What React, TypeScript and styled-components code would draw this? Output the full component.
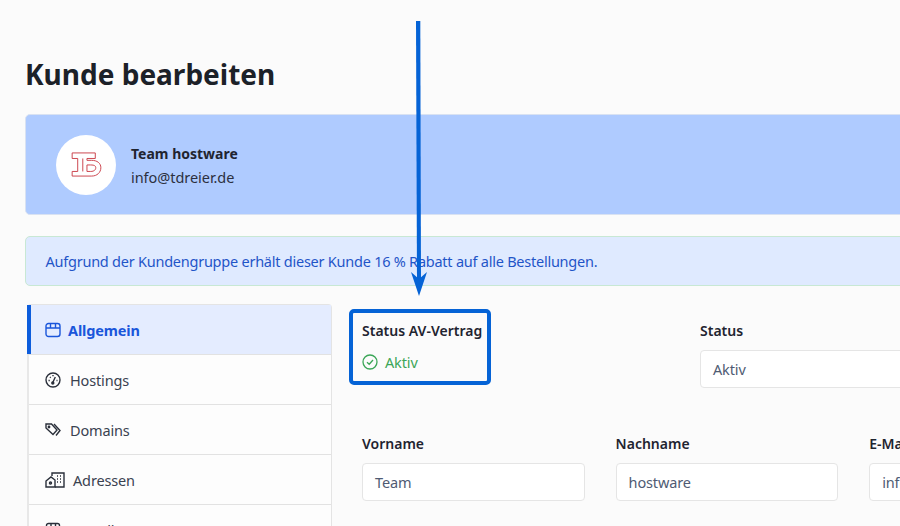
import React from "react";
import styled, { createGlobalStyle } from "styled-components";

const GlobalStyle = createGlobalStyle`
  html, body {
    margin: 0;
    padding: 0;
    width: 900px;
    height: 526px;
    overflow: hidden;
    background: #fbfbfb;
    font-family: "Noto Sans", "Open Sans", sans-serif;
    color: #1f2430;
  }
`;

const Root = styled.div`
  position: relative;
`;

const Page = styled.div`
  width: 1240px;
  padding: 54px 0 0 25px;
  box-sizing: border-box;
`;

const Title = styled.h1`
  margin: 0 0 20px;
  font-size: 28px;
  line-height: 40px;
  font-weight: 700;
  color: #1c2128;
`;

const ProfileCard = styled.div`
  display: flex;
  align-items: center;
  gap: 15px;
  height: 101px;
  box-sizing: border-box;
  padding: 0 30px;
  background: #afcbff;
  border: 1px solid #d9e2f2;
  border-radius: 5px;
`;

const Avatar = styled.div`
  width: 60px;
  height: 60px;
  border-radius: 50%;
  background: #fff;
  display: flex;
  align-items: center;
  justify-content: center;
`;

const ProfileText = styled.div`
  padding-top: 2px;
`;

const ProfileName = styled.div`
  font-size: 14px;
  line-height: 20px;
  font-weight: 700;
  margin-bottom: 3px;
`;

const ProfileMail = styled.div`
  font-size: 14.5px;
  line-height: 20px;
  letter-spacing: -0.05px;
  color: #2c3040;
`;

const Notice = styled.div`
  margin-top: 21px;
  height: 50px;
  box-sizing: border-box;
  padding: 0 19.5px;
  display: flex;
  align-items: center;
  background: #dfeaff;
  border: 1px solid #c8e8d4;
  border-radius: 5px;
  color: #1f55c8;
  font-size: 14.5px;
  letter-spacing: -0.24px;
`;

const Content = styled.div`
  display: flex;
  margin-top: 18px;
`;

const Sidebar = styled.div`
  width: 302px;
  margin-left: 2px;
  flex: none;
  background: #fdfdfd;
  border: 1px solid #e4e4e4;
  border-left: 2px solid #e8e8e8;
  border-radius: 4px 4px 0 0;
`;

const NavItem = styled.div<{ $active?: boolean; $gap?: number }>`
  height: 50px;
  display: flex;
  align-items: center;
  gap: ${(p) => p.$gap ?? 9}px;
  font-size: 14.5px;
  letter-spacing: -0.15px;
  box-sizing: border-box;
  border-bottom: 1px solid #e2e2e2;
  color: ${(p) => (p.$active ? "#1a56db" : "#3a4250")};
  font-weight: ${(p) => (p.$active ? 700 : 400)};
  background: ${(p) => (p.$active ? "#e4ecff" : "transparent")};
  box-shadow: ${(p) => (p.$active ? "inset 4px 0 0 #0d5ddc" : "none")};
  margin-left: ${(p) => (p.$active ? "-2px" : "0")};
  padding-left: ${(p) => (p.$active ? "18px" : "16px")};
`;

const NavIcon = styled.svg<{ $wide?: boolean; $active?: boolean }>`
  width: ${(p) => (p.$wide ? 20 : 16)}px;
  height: 16px;
  fill: none;
  stroke: ${(p) => (p.$active ? "#1a56db" : "#2a2f3a")};
  stroke-width: 1.4;
  flex: none;
`;

const Main = styled.div`
  flex: 1;
  padding: 17px 0 0 30px;
`;

const TopRow = styled.div`
  display: flex;
`;

const AvStatus = styled.div`
  position: relative;
  width: 253px;
  margin-right: 85px;
  height: 70px;
`;

const Highlight = styled.div`
  position: absolute;
  left: -13px;
  top: -12px;
  width: 142px;
  height: 76px;
  box-sizing: border-box;
  border: 4px solid #0563d6;
  border-radius: 5px;
`;

const FieldLabel = styled.div`
  font-size: 14px;
  line-height: 20px;
  font-weight: 600;
  color: #1f2430;
  margin-bottom: 9px;
`;

const ActiveState = styled.div`
  display: flex;
  align-items: center;
  gap: 7px;
  font-size: 14.5px;
  letter-spacing: -0.15px;
  line-height: 20px;
  color: #3ba657;
  margin-top: 11px;
`;

const Field = styled.div<{ $width: number }>`
  width: ${(p) => p.$width}px;
  flex: none;
`;

const Input = styled.div`
  height: 38px;
  box-sizing: border-box;
  padding: 0 12px;
  display: flex;
  align-items: center;
  background: #fff;
  border: 1px solid #e5e5e5;
  border-radius: 4px;
  font-size: 14.5px;
  letter-spacing: -0.15px;
  color: #4f5b73;
`;

const NameRow = styled.div`
  display: flex;
  gap: 31px;
  margin-top: 43px;
`;

const Arrow = styled.svg`
  position: absolute;
  left: 405px;
  top: 20px;
  width: 30px;
  height: 280px;
`;

const TdLogo = () => (
  <svg width="31" height="25" viewBox="0 0 33 27" fill="none" stroke="#c93a44" strokeWidth="1">
    <path d="M1 1H26V7H17V9H22C28 9 32 12 32 17S28 26 22 26H1V21H7V7H1Z" />
    <path d="M12.500 7V21M17 14H21C25 14 26.500 15 26.500 17S25 21 21 21H17Z" />
  </svg>
);

const App: React.FC = () => (
  <Root>
    <GlobalStyle />
    <Page>
      <Title>Kunde bearbeiten</Title>
      <ProfileCard>
        <Avatar>
          <TdLogo />
        </Avatar>
        <ProfileText>
          <ProfileName>Team hostware</ProfileName>
          <ProfileMail>info@tdreier.de</ProfileMail>
        </ProfileText>
      </ProfileCard>
      <Notice>Aufgrund der Kundengruppe erhält dieser Kunde 16 % Rabatt auf alle Bestellungen.</Notice>
      <Content>
        <Sidebar>
          <NavItem $active $gap={7}>
            <NavIcon $active viewBox="0 0 16 16">
              <rect x="1" y="1.500" width="14" height="13" rx="2.500" />
              <path d="M1 6H15M5.500 1.500V6M10.500 1.500V6" />
            </NavIcon>
            Allgemein
          </NavItem>
          <NavItem>
            <NavIcon viewBox="0 0 16 16">
              <circle cx="8" cy="8" r="7" />
              <path d="M7.800 10.500L10.300 5M3.500 8.500H4.800M5 5L5.700 5.700M8 3V4.200M11.500 8.500H12.500" />
              <circle cx="7.800" cy="11" r="1" fill="#2a2f3a" />
            </NavIcon>
            Hostings
          </NavItem>
          <NavItem>
            <NavIcon viewBox="0 0 16 16">
              <path d="M1 2H6.500L12 8L8 12.500L1 6Z" />
              <path d="M9 2L15 8.500L11 13.500" />
              <circle cx="4" cy="5" r="0.700" />
            </NavIcon>
            Domains
          </NavItem>
          <NavItem $gap={8}>
            <NavIcon $wide viewBox="0 0 20 16">
              <path d="M1 9L6 5L10 8V15H1Z" />
              <path d="M7 4V1H19V15H10" />
              <path d="M12 4H13M15 4H16M12 7H13M15 7H16M12 10H13M15 10H16" />
              <circle cx="5.500" cy="11" r="1" />
            </NavIcon>
            Adressen
          </NavItem>
          <NavItem>
            <NavIcon viewBox="0 0 16 16">
              <rect x="1.500" y="1.500" width="13" height="13" rx="2" />
              <path d="M1.500 6H14.500M6 1.500V6M10.500 1.500V6" />
            </NavIcon>
            Bestellungen
          </NavItem>
        </Sidebar>
        <Main>
          <TopRow>
            <AvStatus>
              <Highlight />
              <FieldLabel>Status AV-Vertrag</FieldLabel>
              <ActiveState>
                <svg width="16" height="16" viewBox="0 0 16 16" fill="none" stroke="#3ba657" strokeWidth="1.300">
                  <circle cx="8" cy="8" r="7" />
                  <path d="M5 8.200L7.200 10.300L11 6" />
                </svg>
                Aktiv
              </ActiveState>
            </AvStatus>
            <Field $width={400}>
              <FieldLabel>Status</FieldLabel>
              <Input>Aktiv</Input>
            </Field>
          </TopRow>
          <NameRow>
            <Field $width={222.6}>
              <FieldLabel>Vorname</FieldLabel>
              <Input>Team</Input>
            </Field>
            <Field $width={222.6}>
              <FieldLabel>Nachname</FieldLabel>
              <Input>hostware</Input>
            </Field>
            <Field $width={222.6}>
              <FieldLabel>E-Mail</FieldLabel>
              <Input>info@tdreier.de</Input>
            </Field>
          </NameRow>
        </Main>
      </Content>
    </Page>
    <Arrow viewBox="0 0 30 280">
      <path d="M11 1H15.300L16 262H12Z" fill="#0563d6" />
      <path d="M6 252L14 276L22 252L14 259Z" fill="#0563d6" />
    </Arrow>
  </Root>
);

export default App;
